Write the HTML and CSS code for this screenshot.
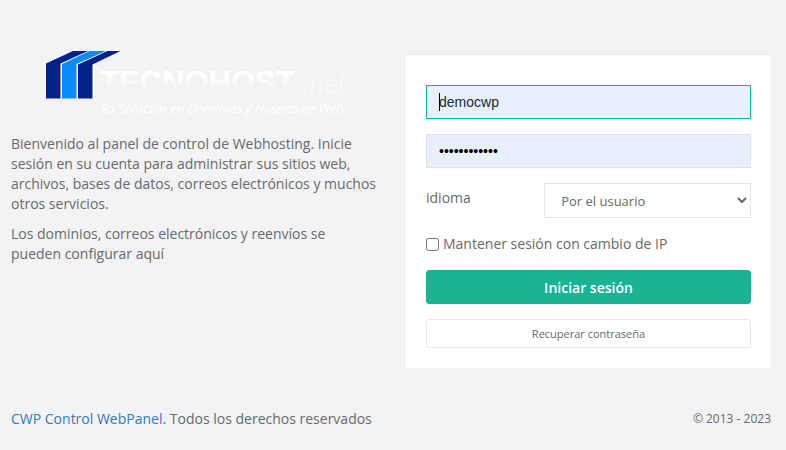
FILE: index.html
```
<!DOCTYPE html>
<html lang="es">

<head>
    <meta charset="UTF-8">
    <meta name="viewport" content="width=device-width, initial-scale=1.0">
    <title>CWP Control WebPanel</title>
    <link rel="stylesheet" href="styles.css">
</head>

<body>
    <div class="login-page">
        <main class="columns">
            <section class="intro">
                <svg class="logo" width="340" height="74" viewBox="0 0 340 74" role="img" aria-label="Tecnohost.net">
                    <defs>
                        <linearGradient id="fade" x1="0" y1="0" x2="0" y2="1">
                            <stop offset="0.3" stop-color="#ffffff" />
                            <stop offset="0.8" stop-color="#f0f0f2" />
                        </linearGradient>
                    </defs>
                    <path fill="#fff" d="M48 14 76 1H97L83 14.500V48H48z" />
                    <path fill="#02228a" d="M35 13.5 62 1H77L49.5 13.5V48.500H35z" />
                    <path fill="#0a8cff" d="M51 14 78.500 1H95L65.500 14V48.500H51z" />
                    <path fill="#02228a" d="M67 14.500 96.500 1H109.500L81.500 14.500V48.500H67z" />
                    <text class="logo-name" x="89" y="43" fill="url(#fade)">TECNOHOST</text>
                    <text class="logo-net" x="291" y="43">.net</text>
                    <text class="logo-slogan" x="90" y="63">Su Solución en Dominios y Hospedaje Web</text>
                </svg>
                <p>Bienvenido al panel de control de Webhosting. Inicie sesión en su cuenta para administrar sus sitios web, archivos, bases de datos, correos electrónicos y muchos otros servicios.</p>
                <p>Los dominios, correos electrónicos y reenvíos se pueden configurar aquí</p>
            </section>
            <form class="login-box">
                <div class="user-field">
                    <input type="text" class="form-control" id="username" aria-label="Usuario" value="democwp" autofocus>
                    <span class="caret"></span>
                </div>
                <input type="password" class="form-control" id="password" aria-label="Contraseña" value="contrasena12">
                <div class="language">
                    <label for="language">idioma</label>
                    <select id="language">
                        <option>Por el usuario</option>
                    </select>
                </div>
                <div class="keep-session">
                    <input type="checkbox" id="keepSession">
                    <label for="keepSession">Mantener sesión con cambio de IP</label>
                </div>
                <button type="submit" class="btn btn-primary">Iniciar sesión</button>
                <button type="button" class="btn btn-white">Recuperar contraseña</button>
            </form>
        </main>
        <footer class="footer">
            <div><a href="#">CWP Control WebPanel.</a> Todos los derechos reservados</div>
            <small>© 2013 - 2023</small>
        </footer>
    </div>
</body>

</html>
```
FILE: styles.css
```
* {
    box-sizing: border-box;
}

body {
    margin: 0;
    background-color: #f3f3f5;
    color: #676a6c;
    font-family: "Open Sans", Arial, sans-serif;
    font-size: 14px;
    line-height: 20px;
}

.login-page {
    max-width: 800px;
    margin: 0 auto;
    padding: 50px 15px 20px 11px;
}

.columns {
    display: grid;
    grid-template-columns: 1fr 1fr;
    gap: 30px;
}

/* Left side */
.logo {
    display: block;
    max-width: 100%;
    margin-bottom: 10px;
}

.logo-name {
    font-family: "Liberation Sans", Arial, sans-serif;
    font-size: 31px;
    font-weight: bold;
}

.logo-net {
    font-family: "Liberation Sans", Arial, sans-serif;
    font-size: 26px;
    font-style: italic;
    fill: #f8f8f9;
}

.logo-slogan {
    font-size: 13px;
    font-style: italic;
    fill: #fff;
}

.intro p {
    margin: 0 0 10px;
}

/* Login form */
.login-box {
    display: flex;
    flex-direction: column;
    gap: 15px;
    margin-top: 4px;
    padding: 30px 20px 20px;
    background-color: #fff;
    border-top: 1px solid #e7eaec;
}

.user-field {
    display: flex;
    position: relative;
}

.form-control {
    width: 100%;
    height: 34px;
    padding: 6px 12px;
    border: 1px solid #dde2ea;
    border-radius: 0;
    background-color: #e8f0fe;
    color: #000;
    font-family: "Liberation Sans", Arial, sans-serif;
    font-size: 14px;
    outline: none;
}

.form-control:focus {
    border-color: #1ab394;
}

#username {
    color: #24282e;
    caret-color: transparent;
}

.caret {
    position: absolute;
    top: 8px;
    left: 13px;
    width: 1px;
    height: 18px;
    background-color: #000;
}

.language {
    display: grid;
    grid-template-columns: 4fr 7fr;
}

.language label {
    padding-top: 5px;
}

.language select {
    height: 35px;
    padding: 6px 12px;
    border: 1px solid #e5e6e7;
    border-radius: 0;
    background-color: #fff;
    color: #676a6c;
    font-family: inherit;
    font-size: 13px;
}

.keep-session {
    display: flex;
    align-items: center;
    gap: 4px;
    padding: 1px 0;
}

.keep-session input {
    width: 13px;
    height: 13px;
    margin: 0;
}

.btn {
    border: 1px solid #e7eaec;
    border-radius: 3px;
    font-family: inherit;
    cursor: pointer;
}

.btn-primary {
    height: 34px;
    border-color: #1ab394;
    background-color: #1ab394;
    color: #fff;
    font-size: 14px;
    font-weight: 600;
}

.btn-white {
    height: 29px;
    background-color: #fff;
    color: #676a6c;
    font-size: 11px;
}

/* Footer */
.footer {
    display: flex;
    justify-content: space-between;
    align-items: center;
    margin-top: 20px;
    padding-top: 20px;
    border-top: 1px solid #eee;
}

.footer a {
    color: #337ab7;
    text-decoration: none;
}

.footer small {
    font-size: 12px;
}
```
